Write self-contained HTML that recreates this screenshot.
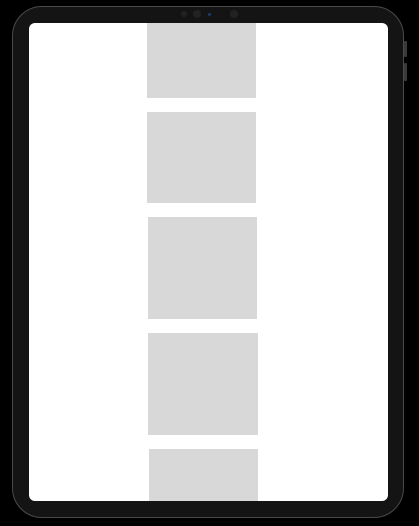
<!DOCTYPE html>
<html><head><style>
html,body{margin:0;padding:0;background:#000;width:419px;height:526px;overflow:hidden;position:relative}
.dev{position:absolute;left:12px;top:6px;width:390px;height:510px;background:#141414;border-radius:30px;border:1px solid #4a4a4a}
.scr{position:absolute;left:29px;top:23px;width:359px;height:478px;background:#fff;border-radius:6px;overflow:hidden}
.r{position:absolute;background:#d8d8d8}
.cam{position:absolute;border-radius:50%;background:#222}
.btn{position:absolute;left:404px;width:3px;background:#3a3a3a;border-radius:1px}
</style></head><body>
<div class="dev"></div>
<div class="btn" style="top:41px;height:16px"></div>
<div class="btn" style="top:63px;height:18px"></div>
<div class="cam" style="left:181px;top:11px;width:6px;height:6px"></div>
<div class="cam" style="left:193px;top:10px;width:8px;height:8px"></div>
<div class="cam" style="left:208px;top:13px;width:3px;height:3px;background:#1c3a6a"></div>
<div class="cam" style="left:230px;top:10px;width:8px;height:8px"></div>
<div class="scr">
<div class="r" style="left:118px;top:0;width:109px;height:75px"></div>
<div class="r" style="left:118px;top:89px;width:109px;height:91px"></div>
<div class="r" style="left:119px;top:194px;width:109px;height:102px"></div>
<div class="r" style="left:119px;top:310px;width:110px;height:102px"></div>
<div class="r" style="left:120px;top:426px;width:109px;height:60px"></div>
</div>
</body></html>
